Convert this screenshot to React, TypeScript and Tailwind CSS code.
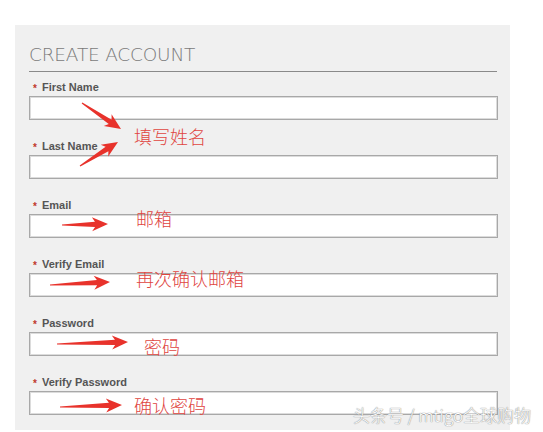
import React from "react";

type ArrowProps = { x1: number; y1: number; x2: number; y2: number };

function Arrow({ x1, y1, x2, y2 }: ArrowProps) {
  const dx = x2 - x1;
  const dy = y2 - y1;
  const L = Math.sqrt(dx * dx + dy * dy);
  const a = (Math.atan2(dy, dx) * 180) / Math.PI;
  const pts = [
    [0, -0.6],
    [L - 13, -2.6],
    [L - 16, -7],
    [L, 0],
    [L - 16, 7],
    [L - 13, 2.6],
    [0, 0.6],
  ]
    .map((p) => p.join(","))
    .join(" ");
  return (
    <g transform={`translate(${x1},${y1}) rotate(${a})`}>
      <polygon points={pts} fill="#e8322b" />
    </g>
  );
}

const fields = [
  "First Name",
  "Last Name",
  "Email",
  "Verify Email",
  "Password",
  "Verify Password",
];

const notes: { text: string; left: number; top: number }[] = [
  { text: "填写姓名", left: 134, top: 127 },
  { text: "邮箱", left: 136, top: 209 },
  { text: "再次确认邮箱", left: 136, top: 269 },
  { text: "密码", left: 144, top: 337 },
  { text: "确认密码", left: 134, top: 396 },
];

export default function App() {
  return (
    <div className="relative w-[543px] h-[432px] bg-white overflow-hidden">
      <div className="ml-[15px] pt-[25px]">
        <div className="w-[495px] h-[405px] bg-[#f0f0f0] pt-[18px] pl-[14px] pr-[12px]">
          <div className="w-[468px] border-b border-[#8a8a8a] pb-[4px]">
            <h1
              className="text-[18.5px] leading-[24px] font-extralight text-[#7a7a7a] tracking-[-0.2px]"
              style={{ fontFamily: '"DejaVu Sans", sans-serif' }}
            >
              CREATE ACCOUNT
            </h1>
          </div>
          <div className="mt-[8px] flex flex-col gap-[19px]">
            {fields.map((f) => (
              <div key={f} className="flex flex-col gap-[2px]">
                <label
                  className="pl-[4px] text-[11px] leading-[14px] font-bold text-[#555] flex items-center"
                  style={{ fontFamily: '"Liberation Sans", Arial, sans-serif' }}
                >
                  <span className="text-[#c0392b] text-[10px] leading-[14px] mr-[5px] translate-y-[2px]">*</span>
                  {f}
                </label>
                <div className="w-[469px] h-[24px] bg-white border border-[#a8a8a8] shadow-[inset_0_0_0_1px_#dcdcdc]" />
              </div>
            ))}
          </div>
        </div>
      </div>

      <svg className="absolute left-0 top-0" width="543" height="432" viewBox="0 0 543 432">
        <Arrow x1={82} y1={103} x2={121} y2={129} />
        <Arrow x1={80} y1={166} x2={118} y2={142} />
        <Arrow x1={62} y1={225} x2={108} y2={224} />
        <Arrow x1={50} y1={285} x2={110} y2={282} />
        <Arrow x1={57} y1={344} x2={128} y2={342} />
        <Arrow x1={60} y1={407} x2={122} y2={405} />
      </svg>

      {notes.map((n) => (
        <span
          key={n.text}
          className="absolute text-[18px] leading-[18px] font-light text-[#e0453f] whitespace-nowrap"
          style={{ left: n.left, top: n.top, fontFamily: '"Noto Sans CJK SC", sans-serif' }}
        >
          {n.text}
        </span>
      ))}

      <span
        className="absolute left-[353px] top-[406px] text-[17px] leading-[18px] font-light text-white whitespace-nowrap [text-shadow:0_0_1px_#8a8a8a,0_0_1px_#8a8a8a]"
        style={{ fontFamily: '"Noto Sans CJK SC", sans-serif' }}
      >
        头条号 / mtigo全球购物
      </span>
    </div>
  );
}
